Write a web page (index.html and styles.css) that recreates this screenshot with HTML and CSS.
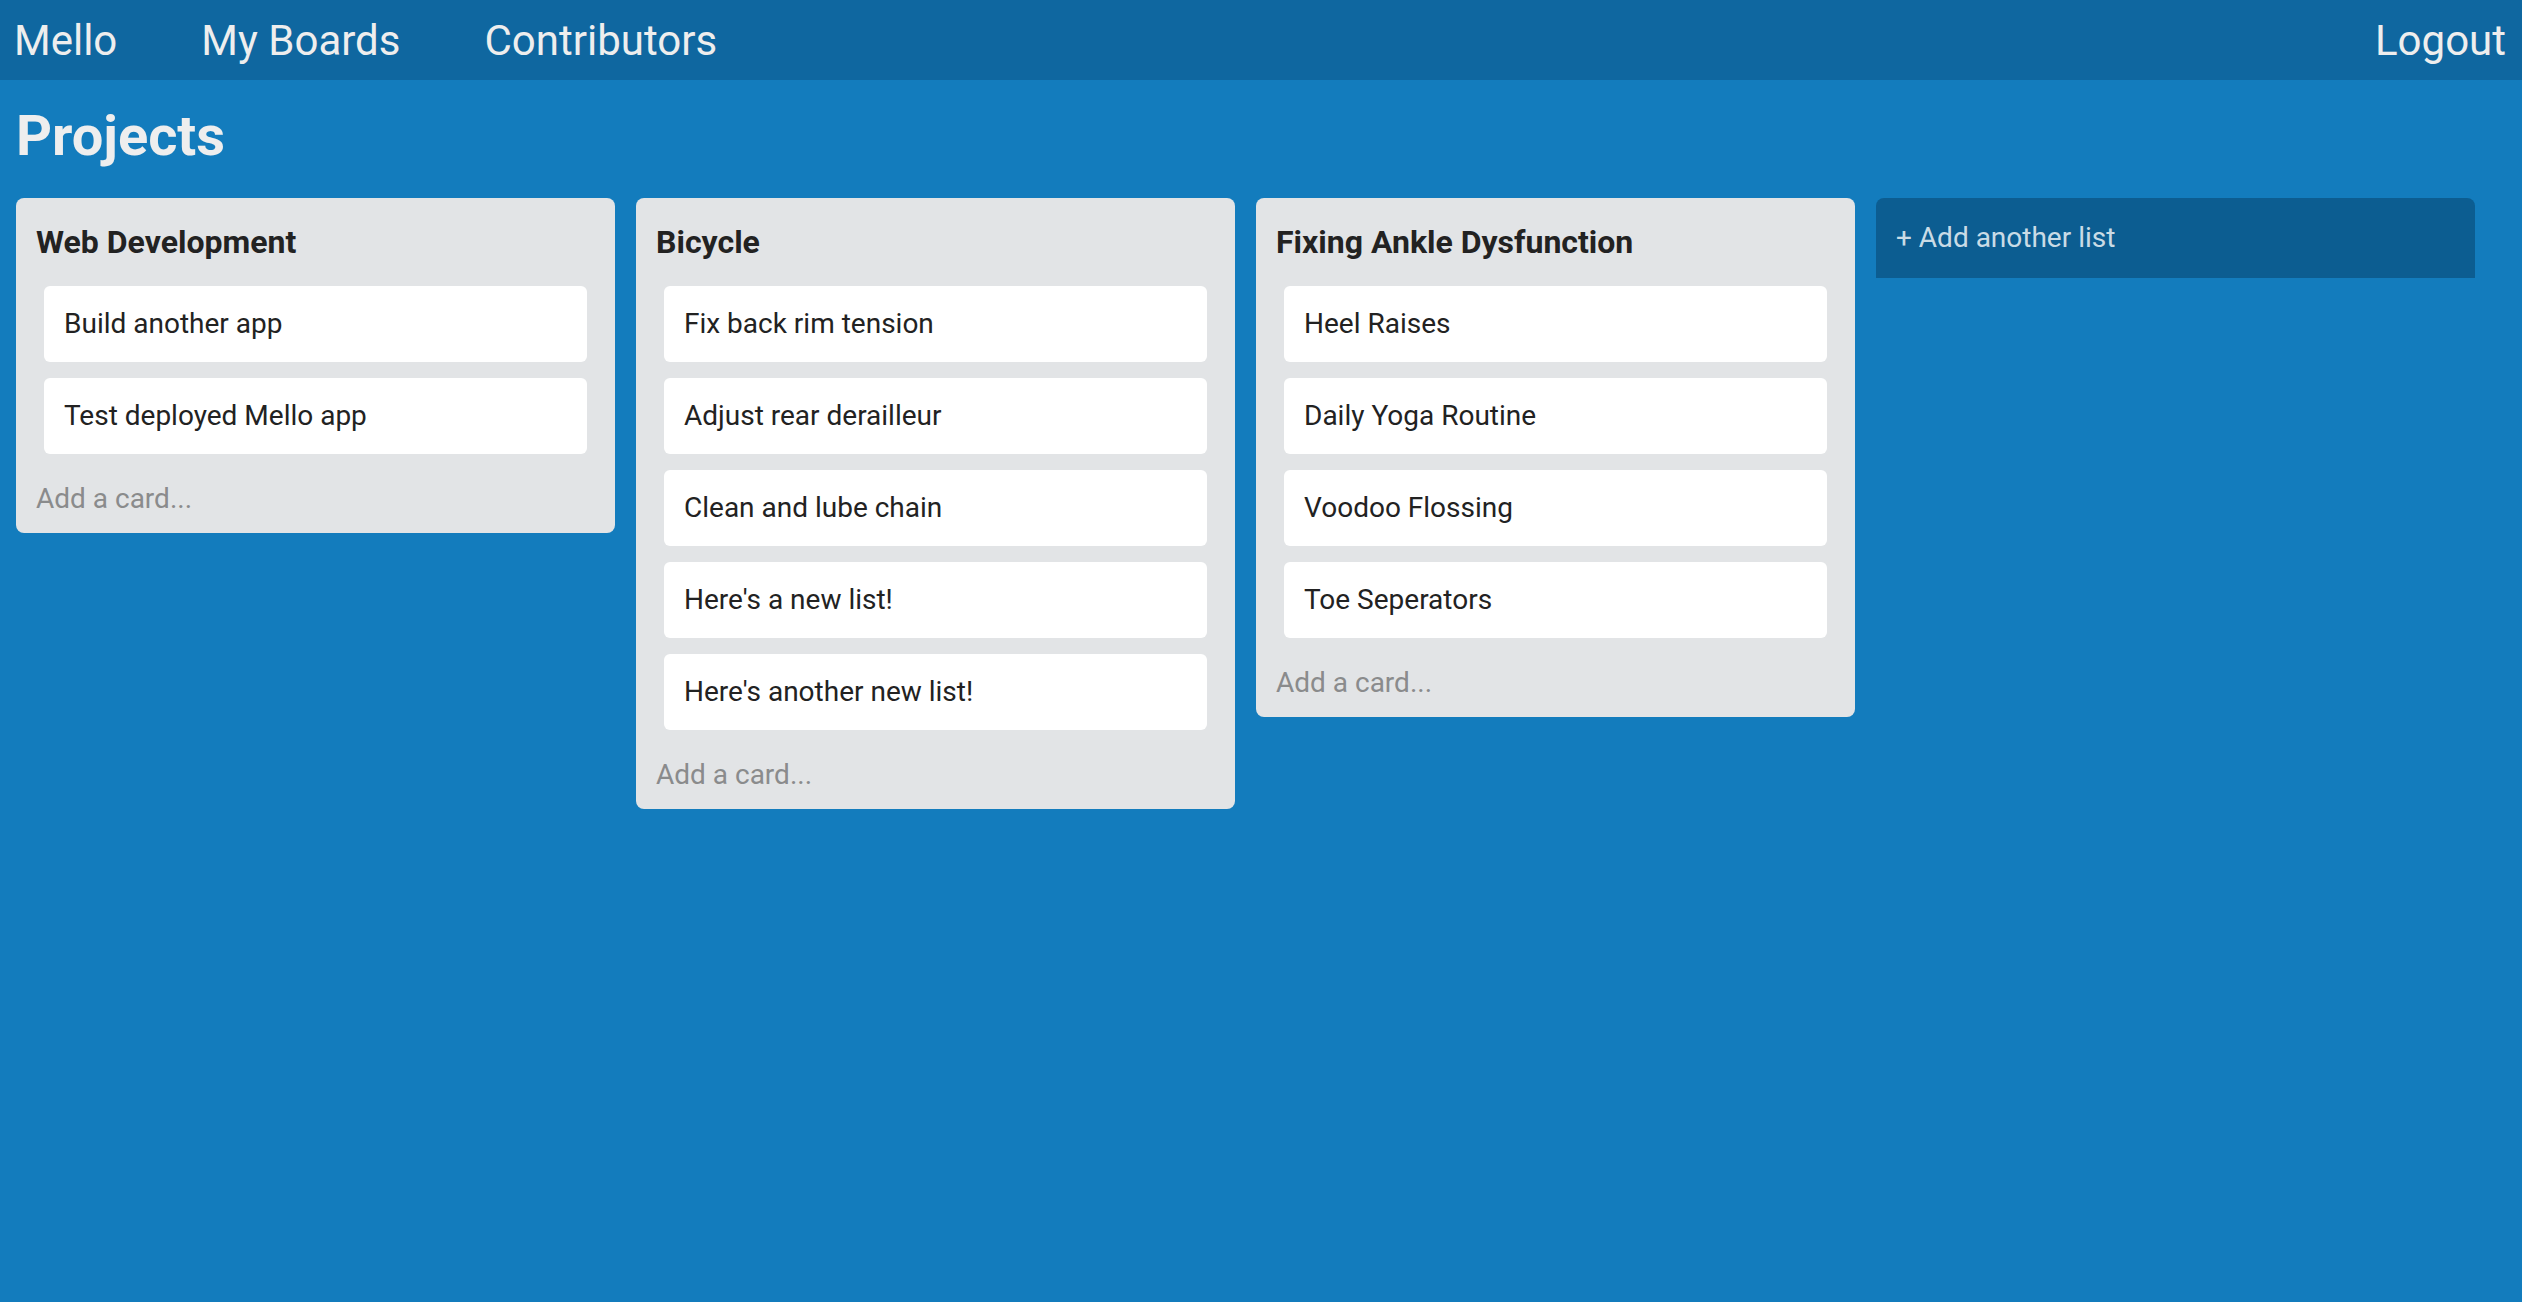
FILE: index.html
```html
<!DOCTYPE html>
<html lang="en">
<head>
<meta charset="utf-8">
<title>Mello</title>
<link rel="stylesheet" href="styles.css">
</head>
<body>
<header class="topbar">
  <nav class="nav-left">
    <a class="nav-link" href="#">Mello</a>
    <a class="nav-link" href="#">My Boards</a>
    <a class="nav-link" href="#">Contributors</a>
  </nav>
  <a class="nav-link" href="#">Logout</a>
</header>
<main class="page">
  <h1 class="board-title">Projects</h1>
  <div class="board">
    <section class="list">
      <h2 class="list-title">Web Development</h2>
      <div class="cards">
        <div class="card">Build another app</div>
        <div class="card">Test deployed Mello app</div>
      </div>
      <div class="add-card">Add a card...</div>
    </section>
    <section class="list">
      <h2 class="list-title">Bicycle</h2>
      <div class="cards">
        <div class="card">Fix back rim tension</div>
        <div class="card">Adjust rear derailleur</div>
        <div class="card">Clean and lube chain</div>
        <div class="card">Here's a new list!</div>
        <div class="card">Here's another new list!</div>
      </div>
      <div class="add-card">Add a card...</div>
    </section>
    <section class="list">
      <h2 class="list-title">Fixing Ankle Dysfunction</h2>
      <div class="cards">
        <div class="card">Heel Raises</div>
        <div class="card">Daily Yoga Routine</div>
        <div class="card">Voodoo Flossing</div>
        <div class="card">Toe Seperators</div>
      </div>
      <div class="add-card">Add a card...</div>
    </section>
    <div class="add-list">+ Add another list</div>
  </div>
</main>
</body>
</html>
```
FILE: styles.css
```css
* { box-sizing: border-box; }

html, body {
  margin: 0;
  padding: 0;
}

body {
  background: #137cbd;
  font-family: Roboto, "Liberation Sans", sans-serif;
  min-height: 1302px;
}

.topbar {
  height: 80px;
  background: #0f67a0;
  display: flex;
  align-items: center;
  justify-content: space-between;
  padding: 0 16px 0 14px;
}

.nav-left {
  display: flex;
  gap: 84px;
}

.nav-link {
  color: #eeeeee;
  text-decoration: none;
  font-size: 42px;
  line-height: normal;
}

.page {
  padding: 0 16px;
}

.board-title {
  margin: 23px 0 29px 0;
  font-size: 56px;
  font-weight: 700;
  line-height: normal;
  color: #eeeeee;
}

.board {
  display: flex;
  align-items: flex-start;
  gap: 21px;
}

.list {
  width: 599px;
  flex: 0 0 599px;
  background: #e2e4e6;
  border-radius: 8px;
  padding: 25px 20px 18px 20px;
}

.list-title {
  margin: 0 0 25px;
  font-size: 32px;
  font-weight: 700;
  line-height: normal;
  color: #222222;
}

.cards {
  display: flex;
  flex-direction: column;
  gap: 16px;
  margin: 0 8px 28px 8px;
}

.card {
  background: #ffffff;
  border-radius: 6px;
  padding: 21px 19px 21px 20px;
  font-size: 28px;
  line-height: 34px;
  color: #222222;
}

.add-card {
  font-size: 28px;
  line-height: normal;
  color: #8a8b8c;
}

.add-list {
  width: 599px;
  flex: 0 0 599px;
  background: #0c5d91;
  border-radius: 8px 8px 0 0;
  padding: 23px 20px 24px;
  font-size: 28px;
  line-height: normal;
  color: rgba(255, 255, 255, 0.8);
}
```
